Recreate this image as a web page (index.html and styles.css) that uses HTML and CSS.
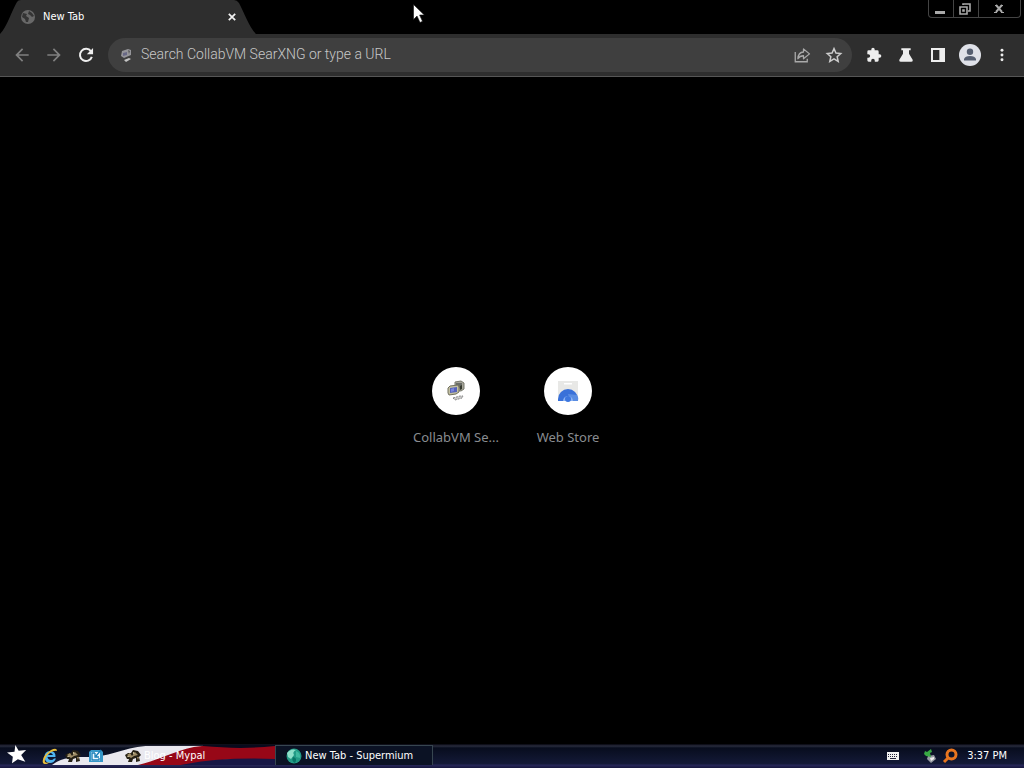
FILE: index.html
```html
<!DOCTYPE html>
<html lang="en">
<head>
<meta charset="utf-8">
<meta name="viewport" content="width=device-width, initial-scale=1">
<title>New Tab</title>
<link rel="stylesheet" href="styles.css">
</head>
<body>
<header class="tabstrip">
  <div class="tab">
    <svg class="tab-shape" viewBox="0 0 256 34" preserveAspectRatio="none" aria-hidden="true"><path d="M0 34C7 27 12 10 17 2Q18 0 21 0H234Q237 0 239 3C244 12 249 27 256 34Z" fill="#2e2e2e"/></svg>
    <svg class="globe" viewBox="0 0 16 16" aria-hidden="true"><circle cx="8" cy="8" r="7" fill="#686868"/><path d="M3 4L7 5 6 7 9 9 8 13 6 13 5 10 2 8ZM9 2L12 4 14 7 12 8 10 6 8 5Z" fill="#343434"/></svg>
    <span class="tab-title">New Tab</span>
    <button class="tab-close" aria-label="Close tab"><svg viewBox="0 0 8 8"><path d="M.8.8L7.2 7.2M7.2.8L.8 7.2" stroke="#f2f2f2" stroke-width="1.7"/></svg></button>
  </div>
  <div class="window-buttons">
    <button aria-label="Minimize"><svg viewBox="0 0 12 12"><path d="M1 8H11V11H1Z" fill="#aaa"/></svg></button>
    <button aria-label="Restore"><svg viewBox="0 0 12 12"><path d="M4 2V1H11V8H9M1 4H8V11H1ZM4 7H5V8H4Z" fill="none" stroke="#aaa" stroke-width="1.600"/></svg></button>
    <button class="wide" aria-label="Close"><svg viewBox="0 0 12 12"><path d="M3 2L9 9M9 2L3 9" stroke="#aaa" stroke-width="2"/><path d="M2 2.500H4M8 2.500H10M1 9.500H4M8 9.500H11" stroke="#aaa"/></svg></button>
  </div>
</header>

<nav class="toolbar">
  <button class="tool" aria-label="Back"><svg viewBox="0 0 24 24"><path d="M20 11H7.800L13.400 5.400 12 4 4 12 12 20 13.400 18.600 7.800 13H20Z" fill="#808080"/></svg></button>
  <button class="tool" aria-label="Forward"><svg viewBox="0 0 24 24"><path d="M4 11H16.200L10.600 5.400 12 4 20 12 12 20 10.600 18.600 16.200 13H4Z" fill="#808080"/></svg></button>
  <button class="tool" aria-label="Reload"><svg viewBox="0 0 24 24"><path d="M18 7.600A7.300 7.300 0 1 0 19 14.200" fill="none" stroke="#eee" stroke-width="2.400"/><path d="M20.500 3.500V11H13Z" fill="#eee"/></svg></button>
  <div class="omnibox">
    <svg class="engine" viewBox="0 0 16 16" aria-hidden="true"><path d="M4 4L10 2 13 3 13 8 6 11 3 9Z" fill="#95959a"/><path d="M5 6L9 5 9 8 5 9Z" fill="#686886"/><path d="M10 3L12 4 11 7Z" fill="#585858"/><path d="M6 13L11 11 13 12 8 15Z" fill="#c5c5c5"/></svg>
    <input type="text" aria-label="Address and search bar" placeholder="Search CollabVM SearXNG or type a URL">
    <button class="tool" aria-label="Share"><svg viewBox="0 0 24 24"><path d="M3 8V21H19V17" fill="none" stroke="#aaa" stroke-width="1.700"/><path d="M14 4L22 10.500 14 17V13Q9 13 6.500 17 7 8.500 14 8Z" fill="none" stroke="#aaa" stroke-width="1.700" stroke-linejoin="round"/></svg></button>
    <button class="tool" aria-label="Bookmark this tab"><svg viewBox="0 0 24 24"><path d="M12 3.500L14.600 9.300 21 10 16.200 14.200 17.600 20.500 12 17.200 6.400 20.500 7.800 14.200 3 10 9.400 9.300Z" fill="none" stroke="#ccc" stroke-width="2"/></svg></button>
  </div>
  <div class="actions">
    <button class="tool" aria-label="Extensions"><svg viewBox="0 0 24 24"><path d="M20.500 11H19V7a2 2 0 0 0-2-2h-4V3.500a2.500 2.500 0 0 0-5 0V5H4a2 2 0 0 0-2 2v3.800h1.500a2.700 2.700 0 0 1 0 5.400H2V20a2 2 0 0 0 2 2h3.800v-1.500a2.700 2.700 0 0 1 5.400 0V22H17a2 2 0 0 0 2-2v-4h1.500a2.500 2.500 0 0 0 0-5Z" fill="#eee"/></svg></button>
    <button class="tool" aria-label="Experiments"><svg viewBox="0 0 24 24"><path d="M5 2H19V5H16.500V10L22 19Q23 22 20 22H4Q1 22 2 19L7.500 10V5H5Z" fill="#eee"/></svg></button>
    <button class="tool" aria-label="Side panel"><svg viewBox="0 0 24 24"><path d="M3 3H21V21H3Z" fill="none" stroke="#eee" stroke-width="3"/><path d="M14 3H22V21H14Z" fill="#eee"/></svg></button>
    <button class="tool profile" aria-label="Profile"><svg viewBox="0 0 22 22"><circle cx="11" cy="11" r="11" fill="#dfe1e8"/><circle cx="11" cy="7.700" r="3.200" fill="#555e70"/><path d="M5 16.500V15Q6 12 11 12T17 15V16.500Z" fill="#555e70"/></svg></button>
    <button class="tool" aria-label="Menu"><svg viewBox="0 0 24 24"><circle cx="12" cy="5" r="2.200" fill="#eee"/><circle cx="12" cy="12" r="2.200" fill="#eee"/><circle cx="12" cy="19" r="2.200" fill="#eee"/></svg></button>
  </div>
</nav>

<main class="page">
  <a class="tile" href="#search">
    <span class="disc"><svg viewBox="0 0 24 24" aria-hidden="true"><path d="M11 3L17 2 20 4V10L17 12 11 11Z" fill="#a7a69a" stroke="#77786c"/><path d="M12 4L18 4V9L12 10Z" fill="#696c67"/><path d="M4 9L6 7 14 6 15 8V13L12 15 5 16 4 14Z" fill="#c2c0a2" stroke="#72705e"/><path d="M6 9L13 8V13L6 14Z" fill="#5562ba"/><path d="M7 10L10 9V12L7 13Z" fill="#7884dc"/><path d="M16 7L18 6V10L16 11Z" fill="#34382e"/><path d="M9 19L16 17 19 17 18 19 11 21Z" fill="#ccc" stroke="#888" stroke-dasharray="2 1"/></svg></span>
    <span class="tile-label">CollabVM Se...</span>
  </a>
  <a class="tile" href="#store">
    <span class="disc"><svg viewBox="0 0 24 24" aria-hidden="true"><path d="M2 2H22V20Q22 22 20 22H4Q2 22 2 20Z" fill="#e8e8e6"/><path d="M8 4H16V5.500H8Z" fill="#fff"/><path d="M2 22V20A10 10 0 0 1 22 20V22Z" fill="#3971d9"/><path d="M12 15L21 16Q23 19 22 22H14Z" fill="#5a8de2"/><path d="M7 22A5 5 0 1 1 17 22Z" fill="#8bb3f4"/><circle cx="12" cy="20" r="3" fill="#3c76df"/></svg></span>
    <span class="tile-label">Web Store</span>
  </a>
</main>

<footer class="taskbar">
  <div class="left-zone">
    <svg class="wave" viewBox="0 0 275 24" preserveAspectRatio="none" aria-hidden="true"><path d="M52 21C62 13 73 13 88 13C112 13 126 2 150 2H275V18H163V21Z" fill="#e9e8ef"/><path d="M138 21C164 15 178 4 202 2H275V15C245 15 225 15 205 18Q190 20 181 21Z" fill="#970717"/><path d="M181 21Q219 13 275 15V21Z" fill="#171745"/><path d="M203 2C227 4 246 5 275 2V1H203Z" fill="#090a1d"/></svg>
    <button class="start" aria-label="Start"><svg viewBox="0 0 24 24"><path d="M10 0L14 7 23 6 17 12 22 20 13 17 6 22 7 14 0 9 9 8Z" fill="#fff"/></svg></button>
    <div class="launch">
      <button aria-label="Internet Explorer"><svg viewBox="0 0 16 16"><path d="M13.500 9H5.500Q6 12 9 12 11 12 12 10.500H14Q12 15 8 15 2.500 14.500 2.500 9T8 3Q14 3 13.500 9ZM6 7H11Q10 5 8.500 5T6 7Z" fill="#4fb5f2"/><path d="M1 15Q-1 9 9 2Q15-1 15 3Q14 2 9 4 2 9 3 14 5 16 9 13 4 18 1 15Z" fill="#e8bd3b"/></svg></button>
      <button aria-label="Mypal"><svg viewBox="0 0 16 16"><path d="M0 7L3 5 6 5 8 2 13 3 16 7 14 9 15 13 11 14 11 10 8 11 7 14 3 14 4 11 2 11Z" fill="#262116"/><path d="M2 7L5 5 7 8 10 4 13 7 9 8 6 10ZM12 9L14 9 13 12Z" fill="#9f8d67"/><path d="M2 8L5 8 3 9ZM8 4L10 5 8 6Z" fill="#eee2b7"/></svg></button>
      <button aria-label="Show desktop"><svg viewBox="0 0 16 16"><path d="M3 2H13L15 4V14H1V4Z" fill="#3697c9"/><path d="M3 4H12V13H3Z" fill="#eef8ff"/><path d="M13 2L8 8M7 5V9H11M7 5H4V12H11V10" fill="none" stroke="#187db8" stroke-width="1.300"/></svg></button>
    </div>
    <button class="task">
      <svg viewBox="0 0 16 16" aria-hidden="true"><path d="M0 7L3 5 6 5 8 2 13 3 16 7 14 9 15 13 11 14 11 10 8 11 7 14 3 14 4 11 2 11Z" fill="#262116"/><path d="M2 7L5 5 7 8 10 4 13 7 9 8 6 10ZM12 9L14 9 13 12Z" fill="#9f8d67"/><path d="M2 8L5 8 3 9ZM8 4L10 5 8 6Z" fill="#eee2b7"/></svg>
      <span>Blog - Mypal</span>
    </button>
  </div>
  <button class="task active">
    <svg viewBox="0 0 16 16" aria-hidden="true"><circle cx="8" cy="8" r="7.500" fill="#239b86"/><path d="M1 5Q5 0 10 2 6 4 8 7L5 11 2 9Z" fill="#8fe0ca"/><path d="M10 3Q15 5 14 10L10 9Z" fill="#3fb99f"/><path d="M7 9Q12 10 9 15 5 13 7 9Z" fill="#087665"/></svg>
    <span>New Tab - Supermium</span>
  </button>
  <div class="tray">
    <svg class="keyboard" viewBox="0 0 14 8" aria-label="Keyboard" role="img"><rect x="1" width="12" height="8" fill="#f2f2f2"/><path d="M2 2.500H12M2 4.500H12" stroke="#24243a" stroke-dasharray="1 1"/><path d="M4 6.500H10" stroke="#24243a"/></svg>
    <svg viewBox="0 0 16 16" aria-label="Remove hardware" role="img"><path d="M6 8L12 7 14 11 9 15 5 11Z" fill="#999ca4"/><path d="M8 10L12 9 12 11 9 13Z" fill="#eee"/><path d="M3 3L5 4 9 1 10 4 8 5 9 9 4 8 2 6Z" fill="#39a944"/></svg>
    <svg viewBox="0 0 16 16" aria-label="Search" role="img"><circle cx="9.500" cy="6.500" r="4.500" fill="none" stroke="#e8751f" stroke-width="3"/><path d="M6 10L2 14" stroke="#e8751f" stroke-width="3"/></svg>
    <time>3:37 PM</time>
  </div>
</footer>
<svg class="pointer" viewBox="0 0 12 19" aria-hidden="true"><path d="M.5.5V15.500L4 12 7 18.500 9.500 17.300 6.600 11H11.300Z" fill="#fff" stroke="#111" stroke-width=".6"/></svg>
</body>
</html>
```

FILE: styles.css
```css
* { box-sizing: border-box; }
body {
  margin: 0;
  min-height: 100vh;
  display: flex;
  flex-direction: column;
  background: #000;
  color: #fff;
  font: 11px/16px "DejaVu Sans Condensed", "Liberation Sans", sans-serif;
}
button {
  padding: 0;
  border: 0;
  background: none;
  color: inherit;
  font: inherit;
}
svg { display: block; flex: none; }
.tabstrip {
  height: 34px;
  display: flex;
  align-items: flex-start;
  justify-content: space-between;
}
.tab {
  position: relative;
  width: 256px;
  height: 34px;
  padding: 0 19px 0 20px;
  display: flex;
  align-items: center;
}
.tab > * { position: relative; }
.tab > .tab-shape { position: absolute; inset: 0; width: 100%; height: 100%; }
.globe { width: 16px; height: 16px; }
.tab-title { flex: 1; margin-left: 7px; }
.tab-close { width: 10px; display: grid; place-items: center; }
.tab-close svg { width: 8px; height: 8px; }
.window-buttons {
  height: 18px;
  margin-right: 3px;
  display: flex;
  border: 1px solid #444;
  border-top: 0;
  border-radius: 0 0 4px 4px;
}
.window-buttons button { width: 25px; padding-right: 2px; display: grid; place-items: center; border-right: 1px solid #444; }
.window-buttons .wide { width: 41px; border-right: 0; }
.window-buttons svg { width: 12px; height: 12px; }
.toolbar {
  height: 43px;
  padding: 0 6px;
  display: flex;
  align-items: center;
  background: #2e2e2e;
  border-bottom: 1px solid #565656;
}
.tool { width: 32px; height: 32px; flex: none; display: grid; place-items: center; }
.tool svg { width: 20px; height: 20px; }
.omnibox {
  height: 34px;
  flex: 1;
  margin-left: 6px;
  padding: 0 2px 0 10px;
  display: flex;
  align-items: center;
  background: #3f3f3f;
  border-radius: 17px;
}
.omnibox .tool svg { width: 18px; height: 18px; }
.engine { width: 16px; height: 16px; }
.omnibox input {
  flex: 1;
  min-width: 0;
  height: 28px;
  margin-left: 7px;
  padding: 0 0 2px;
  border: 0;
  outline: 0;
  background: none;
  color: #ddd;
  font: 300 14px/20px Roboto, "Open Sans", sans-serif;
}
.omnibox input::placeholder { color: #c8c8c8; opacity: 1; }
.actions { display: flex; margin-left: 6px; }
.actions svg { width: 16px; height: 16px; }
.actions .profile svg { width: 22px; height: 22px; }
.page {
  flex: 1;
  padding-bottom: 8px;
  display: flex;
  align-items: center;
  justify-content: center;
}
.tile {
  width: 112px;
  display: flex;
  flex-direction: column;
  align-items: center;
  gap: 12px;
  color: #898c90;
  text-decoration: none;
}
.disc {
  width: 48px;
  height: 48px;
  display: grid;
  place-items: center;
  background: #fff;
  border-radius: 50%;
}
.disc svg { width: 24px; height: 24px; }
.tile-label { font: 13px/20px "Noto Sans", sans-serif; }
.taskbar {
  height: 24px;
  display: flex;
  background: linear-gradient(#05050d, #292c3d 2px, #080d1e 4px, #141a38 20px, #28285a 21px, #16163e 24px);
}
.left-zone { position: relative; width: 275px; display: flex; align-items: center; }
.left-zone > * { position: relative; }
.left-zone > .wave { position: absolute; inset: 0; width: 100%; height: 100%; }
.start { margin: 0 0 3px 7px; }
.start svg { width: 20px; height: 20px; }
.launch { display: flex; margin-left: 15px; gap: 7px; }
.launch svg, .task svg, .tray svg { width: 16px; height: 16px; }
.task { display: flex; align-items: center; gap: 3px; }
.launch + .task { margin-left: 21px; }
.active {
  width: 158px;
  height: 20px;
  margin-top: 1px;
  padding-left: 10px;
  background: #0b1224;
  border: 1px solid #374650;
  border-width: 1px 1px 0;
}
.tray { margin-left: auto; padding-right: 17px; display: flex; align-items: center; gap: 4px; }
.tray .keyboard { width: 14px; height: 8px; margin-right: 18px; }
.tray time { margin-left: 5px; }
.pointer { position: absolute; left: 413px; top: 4px; width: 12px; height: 19px; }
```
